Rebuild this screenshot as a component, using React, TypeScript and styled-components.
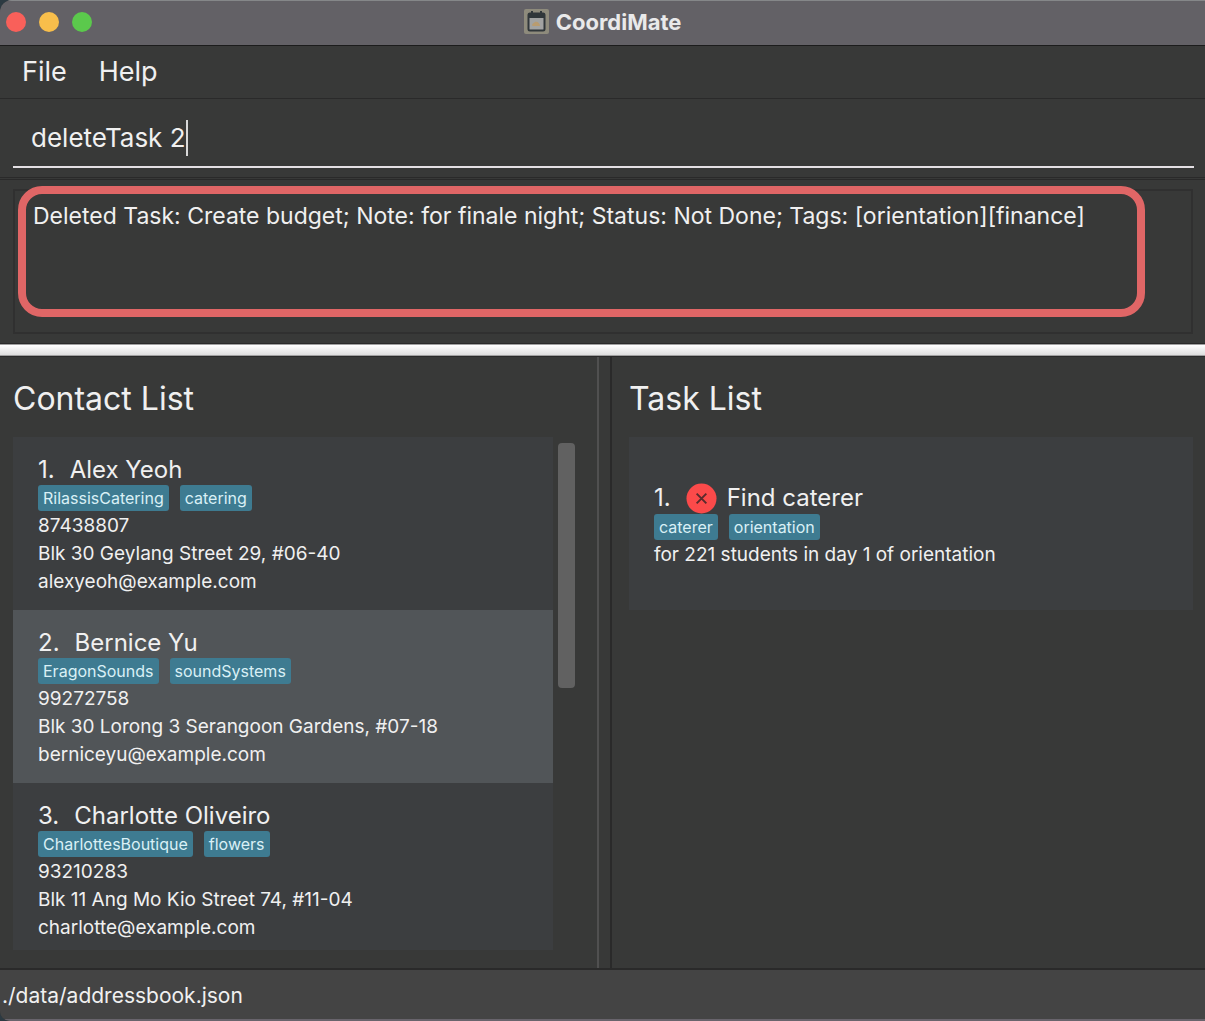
import React, { useState } from "react";
import styled, { createGlobalStyle } from "styled-components";

const color = {
  base: "#383938",
  line: "#2a2a2a",
  text: "#f0f0f0",
  card: "#3c3e40",
  cardAlt: "#515558",
  tag: "#3e7b91",
  accent: "#e06666",
};

const GlobalStyle = createGlobalStyle`
  * { box-sizing: border-box; }
  body {
    margin: 0;
    background: #2c3a42;
    color: ${color.text};
    font-family: Inter, "Liberation Sans", sans-serif;
  }
  button, input { font: inherit; color: inherit; }
  h1, h2, h3, p, ul, ol { margin: 0; padding: 0; font-weight: 400; }
  ul, ol { list-style: none; }
`;

const Window = styled.div`
  height: 100vh;
  display: flex;
  flex-direction: column;
  overflow: hidden;
  background: ${color.base};
  border-radius: 12px 0 0 10px;
`;

const TitleBar = styled.header`
  height: 46px;
  flex: none;
  display: grid;
  grid-template-columns: 1fr auto 1fr;
  align-items: center;
  padding: 0 6px 3px;
  background: #636166;
  border-top: 1px solid #858789;
  border-bottom: 1px solid #1c1c1c;
`;

const WindowControls = styled.div`
  display: flex;
  gap: 13px;
`;

const WindowButton = styled.button<{ $fill: string }>`
  width: 20px;
  height: 20px;
  padding: 0;
  border: 0;
  border-radius: 50%;
  background: ${(p) => p.$fill};
`;

const AppTitle = styled.h1`
  display: flex;
  align-items: center;
  gap: 7px;
  font-size: 22px;
  line-height: 26px;
  font-weight: 700;
  color: #e9e9ea;
`;

const MenuBar = styled.nav`
  height: 53px;
  flex: none;
  display: flex;
  align-items: center;
  padding: 0 6px;
  border-bottom: 1px solid ${color.line};
`;

const MenuButton = styled.button`
  padding: 0 16px;
  border: 0;
  background: none;
  font-size: 27px;
  line-height: 36px;
`;

const CommandPane = styled.form`
  flex: none;
  padding: 10px 11px 9px 13px;
  border-bottom: 1px solid ${color.line};
`;

const CommandLine = styled.div`
  height: 59px;
  display: flex;
  align-items: center;
  padding: 0 18px;
  border-bottom: 2px solid #e4e0e4;
`;

const CommandInput = styled.input`
  field-sizing: content;
  min-width: 2px;
  padding: 0;
  border: 0;
  outline: 0;
  background: none;
  caret-color: transparent;
  font-size: 26px;
  line-height: 36px;
`;

const Caret = styled.span`
  width: 2px;
  height: 36px;
  background: #d8d8d8;
`;

const ResultPane = styled.section`
  position: relative;
  flex: none;
  height: 165px;
  margin-top: 1px;
  padding: 9px 12px 9px 13px;
  border-top: 1px solid ${color.line};
  border-bottom: 1px solid ${color.line};
`;

const ResultBox = styled.div`
  height: 145px;
  padding: 9px 18px;
  border: 2px solid #303030;
  font-size: 23px;
  line-height: 32px;
`;

const Highlight = styled.div`
  position: absolute;
  inset: 6px 60px 26px 18px;
  border: 8px solid ${color.accent};
  border-radius: 24px;
  pointer-events: none;
`;

const HorizontalDivider = styled.div`
  height: 12px;
  flex: none;
  border-top: 1px solid #a0a0a0;
  border-bottom: 1px solid #a0a0a0;
  background: linear-gradient(#ffffff, #dedede);
`;

const Panels = styled.main`
  flex: 1;
  min-height: 0;
  display: grid;
  grid-template-columns: minmax(0, 597fr) 15px minmax(0, 593fr);
  border-top: 1px solid ${color.line};
  border-bottom: 2px solid ${color.line};
`;

const VerticalDivider = styled.div`
  border-left: 2px solid #505050;
  border-right: 2px solid ${color.line};
`;

const Panel = styled.section<{ $left: number; $right: number }>`
  min-height: 0;
  display: flex;
  flex-direction: column;
  padding: 20px ${(p) => p.$right}px 18px ${(p) => p.$left}px;
`;

const PanelTitle = styled.h2`
  flex: none;
  padding-bottom: 16px;
  font-size: 32px;
  line-height: 44px;
`;

const ListArea = styled.div`
  flex: 1;
  min-height: 0;
  display: flex;
  gap: 5px;
`;

const CardList = styled.ol`
  flex: 1;
  min-width: 0;
  overflow: hidden;
`;

const ScrollThumb = styled.div`
  width: 17px;
  height: 245px;
  margin-top: 6px;
  border-radius: 4px;
  background: #616161;
`;

const Card = styled.li<{ $alt?: boolean }>`
  height: 173px;
  display: flex;
  flex-direction: column;
  justify-content: center;
  padding: 4px 25px 0;
  background: ${(p) => (p.$alt ? color.cardAlt : color.card)};
`;

const CardTitle = styled.h3`
  display: flex;
  align-items: center;
  gap: 15px;
  font-size: 24px;
  line-height: 30px;
`;

const TaskName = styled.span`
  display: flex;
  align-items: center;
  gap: 10px;
`;

const Tags = styled.ul`
  display: flex;
  gap: 11px;
  margin-bottom: 1px;
`;

const Tag = styled.li`
  padding: 0 5px;
  border-radius: 3px;
  background: ${color.tag};
  color: #d9f0f6;
  font-size: 16px;
  line-height: 26px;
`;

const Detail = styled.p`
  font-size: 19px;
  line-height: 28px;
  white-space: nowrap;
`;

const StatusBar = styled.footer`
  height: 51px;
  flex: none;
  padding: 8px 2px;
  background: #444444;
  border-bottom: 2px solid #68646c;
  font-size: 21px;
  line-height: 36px;
`;

const CalendarIcon = () => (
  <svg width="25" height="25" viewBox="0 0 25 25" aria-hidden="true">
    <rect width="25" height="25" rx="2" fill="#8e8b7c" />
    <rect x="4.5" y="4.5" width="16" height="17" rx="1.5" fill="#a2a3a2" stroke="#30373a" strokeWidth="2" />
    <path d="M4 4.500h17v4.500H4z" fill="#30373a" />
    <path d="M8 2v4M17 2v4" stroke="#30373a" strokeWidth="2" />
    <path d="M8.500 17c-1-2 1-3 2.500-4 2-1 5 1 5 4z" fill="#b99c70" />
  </svg>
);

const NotDoneIcon = () => (
  <svg width="31" height="31" viewBox="0 0 32 32" role="img" aria-label="Not done">
    <circle cx="16" cy="16" r="15.5" fill="#fb4a4a" />
    <path d="M11 11l10 10M21 11L11 21" stroke="#5a2a2c" strokeWidth="2" />
  </svg>
);

const contacts = [
  { name: "Alex Yeoh", tags: ["RilassisCatering", "catering"], phone: "87438807", address: "Blk 30 Geylang Street 29, #06-40", email: "alexyeoh@example.com" },
  { name: "Bernice Yu", tags: ["EragonSounds", "soundSystems"], phone: "99272758", address: "Blk 30 Lorong 3 Serangoon Gardens, #07-18", email: "berniceyu@example.com" },
  { name: "Charlotte Oliveiro", tags: ["CharlottesBoutique", "flowers"], phone: "93210283", address: "Blk 11 Ang Mo Kio Street 74, #11-04", email: "charlotte@example.com" },
];

const tasks = [
  { name: "Find caterer", tags: ["caterer", "orientation"], note: "for 221 students in day 1 of orientation" },
];

const TagRow = ({ tags }: { tags: string[] }) => (
  <Tags>
    {tags.map((tag) => (
      <Tag key={tag}>{tag}</Tag>
    ))}
  </Tags>
);

export default function App() {
  const [command, setCommand] = useState("deleteTask 2");

  return (
    <>
      <GlobalStyle />
      <Window>
        <TitleBar>
          <WindowControls>
            <WindowButton $fill="#f9605a" aria-label="Close" />
            <WindowButton $fill="#f8be4b" aria-label="Minimize" />
            <WindowButton $fill="#5bc94c" aria-label="Zoom" />
          </WindowControls>
          <AppTitle>
            <CalendarIcon />
            CoordiMate
          </AppTitle>
        </TitleBar>
        <MenuBar>
          <MenuButton>File</MenuButton>
          <MenuButton>Help</MenuButton>
        </MenuBar>
        <CommandPane onSubmit={(e) => e.preventDefault()}>
          <CommandLine>
            <CommandInput aria-label="Command" value={command} onChange={(e) => setCommand(e.target.value)} />
            <Caret />
          </CommandLine>
        </CommandPane>
        <ResultPane>
          <ResultBox>
            Deleted Task: Create budget; Note: for finale night; Status: Not Done; Tags: [orientation][finance]
          </ResultBox>
          <Highlight />
        </ResultPane>
        <HorizontalDivider />
        <Panels>
          <Panel $left={13} $right={22}>
            <PanelTitle>Contact List</PanelTitle>
            <ListArea>
              <CardList>
                {contacts.map((contact, i) => (
                  <Card key={contact.name} $alt={i % 2 === 1}>
                    <CardTitle>
                      <span>{i + 1}.</span>
                      <span>{contact.name}</span>
                    </CardTitle>
                    <TagRow tags={contact.tags} />
                    <Detail>{contact.phone}</Detail>
                    <Detail>{contact.address}</Detail>
                    <Detail>{contact.email}</Detail>
                  </Card>
                ))}
              </CardList>
              <ScrollThumb />
            </ListArea>
          </Panel>
          <VerticalDivider />
          <Panel $left={17} $right={12}>
            <PanelTitle>Task List</PanelTitle>
            <CardList>
              {tasks.map((task, i) => (
                <Card key={task.name} $alt={i % 2 === 1}>
                  <CardTitle>
                    <span>{i + 1}.</span>
                    <TaskName>
                      <NotDoneIcon />
                      {task.name}
                    </TaskName>
                  </CardTitle>
                  <TagRow tags={task.tags} />
                  <Detail>{task.note}</Detail>
                </Card>
              ))}
            </CardList>
          </Panel>
        </Panels>
        <StatusBar>./data/addressbook.json</StatusBar>
      </Window>
    </>
  );
}
